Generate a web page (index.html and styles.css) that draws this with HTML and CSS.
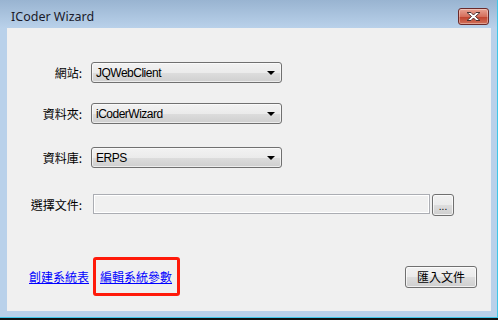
FILE: index.html
```html
<!DOCTYPE html>
<html lang="zh-Hant">
<head>
    <meta charset="UTF-8">
    <title>ICoder Wizard</title>
    <link rel="stylesheet" href="styles.css">
</head>
<body>
    <div class="screen">
        <div class="window">
            <div class="titlebar">
                <span class="title">ICoder Wizard</span>
                <span class="close">
                    <svg width="17" height="11" viewBox="0 0 17 11">
                        <path d="M2 1.5 L6 1.5 L8.5 4 L11 1.5 L15 1.5 L10.5 5.5 L15 9.5 L11 9.5 L8.5 7 L6 9.5 L2 9.5 L6.5 5.5 Z" fill="#fff" stroke="#4a3434" stroke-width="1" stroke-linejoin="round"/>
                    </svg>
                </span>
            </div>
            <div class="client">
                <div class="form">
                    <div class="row row1">
                        <label class="label">網站:</label>
                        <div class="combo"><span>JQWebClient</span><i class="arrow"></i></div>
                    </div>
                    <div class="row row2">
                        <label class="label">資料夾:</label>
                        <div class="combo"><span>iCoderWizard</span><i class="arrow"></i></div>
                    </div>
                    <div class="row row3">
                        <label class="label">資料庫:</label>
                        <div class="combo"><span>ERPS</span><i class="arrow"></i></div>
                    </div>
                    <div class="row row4">
                        <label class="label">選擇文件:</label>
                        <div class="filebox"></div>
                        <div class="btn browse">...</div>
                    </div>
                </div>
                <div class="bottom">
                    <a class="link" href="#">創建系統表</a>
                    <span class="mark"><a class="link" href="#">編輯系統參數</a></span>
                    <div class="btn import">匯入文件</div>
                </div>
            </div>
        </div>
    </div>
</body>
</html>
```
FILE: styles.css
```css
* {
    margin: 0;
    padding: 0;
    box-sizing: border-box;
}
body {
    width: 498px;
    height: 320px;
    overflow: hidden;
    font-family: "Noto Sans CJK TC", "Liberation Sans", sans-serif;
    font-size: 12px;
    color: #000;
}
.screen {
    width: 498px;
    height: 320px;
    border-bottom: 2px solid #111;
}
.window {
    height: 318px;
    display: flex;
    flex-direction: column;
    background: linear-gradient(#99b4d1, #b9d1ea 28px, #b9d1ea);
    border-right: 1px solid #3fc6e8;
    border-bottom: 1px solid #3fc6e8;
}
.titlebar {
    height: 28px;
    display: flex;
    justify-content: space-between;
    align-items: flex-start;
    padding: 0 8px 0 11px;
}
.title {
    font-family: "Noto Sans", sans-serif;
    font-size: 12.5px;
    line-height: 16px;
    margin-top: 9px;
    color: #1a1a2a;
}
.close {
    margin-top: 8px;
    width: 31px;
    height: 17px;
    border: 1px solid #6b2a2a;
    border-radius: 3px;
    background: linear-gradient(#e8a394, #d56f5c 50%, #c0412c 51%, #d0705a);
    display: flex;
    align-items: center;
    justify-content: center;
    box-shadow: inset 0 0 0 1px rgba(255,255,255,0.35);
}
.client {
    height: 283px;
    margin: 0 6px 0 7px;
    background: #f0f0f0;
    display: flex;
    flex-direction: column;
}
.form {
    display: flex;
    flex-direction: column;
}
.row {
    display: flex;
    align-items: center;
}
.row1 { margin-top: 34px; }
.row2 { margin-top: 20px; }
.row3 { margin-top: 23px; }
.row4 { margin-top: 26px; }
.label {
    width: 75px;
    text-align: right;
    line-height: 16px;
}
.combo {
    margin-left: 9px;
    width: 191px;
    height: 21px;
    border: 1px solid #707070;
    border-radius: 3px;
    background: linear-gradient(#f2f2f2, #ebebeb 50%, #dddddd 51%, #cfcfcf);
    box-shadow: inset 0 0 0 1px rgba(255,255,255,0.6);
    display: flex;
    align-items: center;
    justify-content: space-between;
    padding: 0 6px 0 4px;
    font-family: "Liberation Sans", sans-serif;
    font-size: 12px;
    letter-spacing: -0.5px;
}
.arrow {
    width: 0;
    height: 0;
    border-left: 4px solid transparent;
    border-right: 4px solid transparent;
    border-top: 4px solid #000;
}
.filebox {
    margin-left: 11px;
    width: 337px;
    height: 20px;
    border: 1px solid #abadb3;
    box-shadow: inset 0 0 0 1px #fff;
    background: #f0f0f0;
    align-self: flex-start;
}
.btn {
    border: 1px solid #707070;
    border-radius: 3px;
    background: linear-gradient(#f2f2f2, #ebebeb 50%, #dddddd 51%, #cfcfcf);
    box-shadow: inset 0 0 0 1px rgba(255,255,255,0.7);
    display: flex;
    align-items: center;
    justify-content: center;
}
.browse {
    margin-left: 2px;
    width: 22px;
    height: 22px;
    align-items: flex-end;
    padding-bottom: 3px;
    font-family: "Liberation Sans", sans-serif;
    font-size: 10px;
    line-height: 10px;
}
.bottom {
    margin-top: auto;
    margin-bottom: 15px;
    display: flex;
    align-items: center;
    padding: 0 14px 0 22px;
}
.link {
    color: #0000ff;
    text-decoration: underline;
    line-height: 16px;
}
.mark {
    margin-left: 4px;
    height: 39px;
    border: 3px solid #ff1a0a;
    border-radius: 3px;
    padding: 0 5px 0 4px;
    display: flex;
    align-items: center;
}
.import {
    margin-left: auto;
    width: 72px;
    height: 22px;
}
```
